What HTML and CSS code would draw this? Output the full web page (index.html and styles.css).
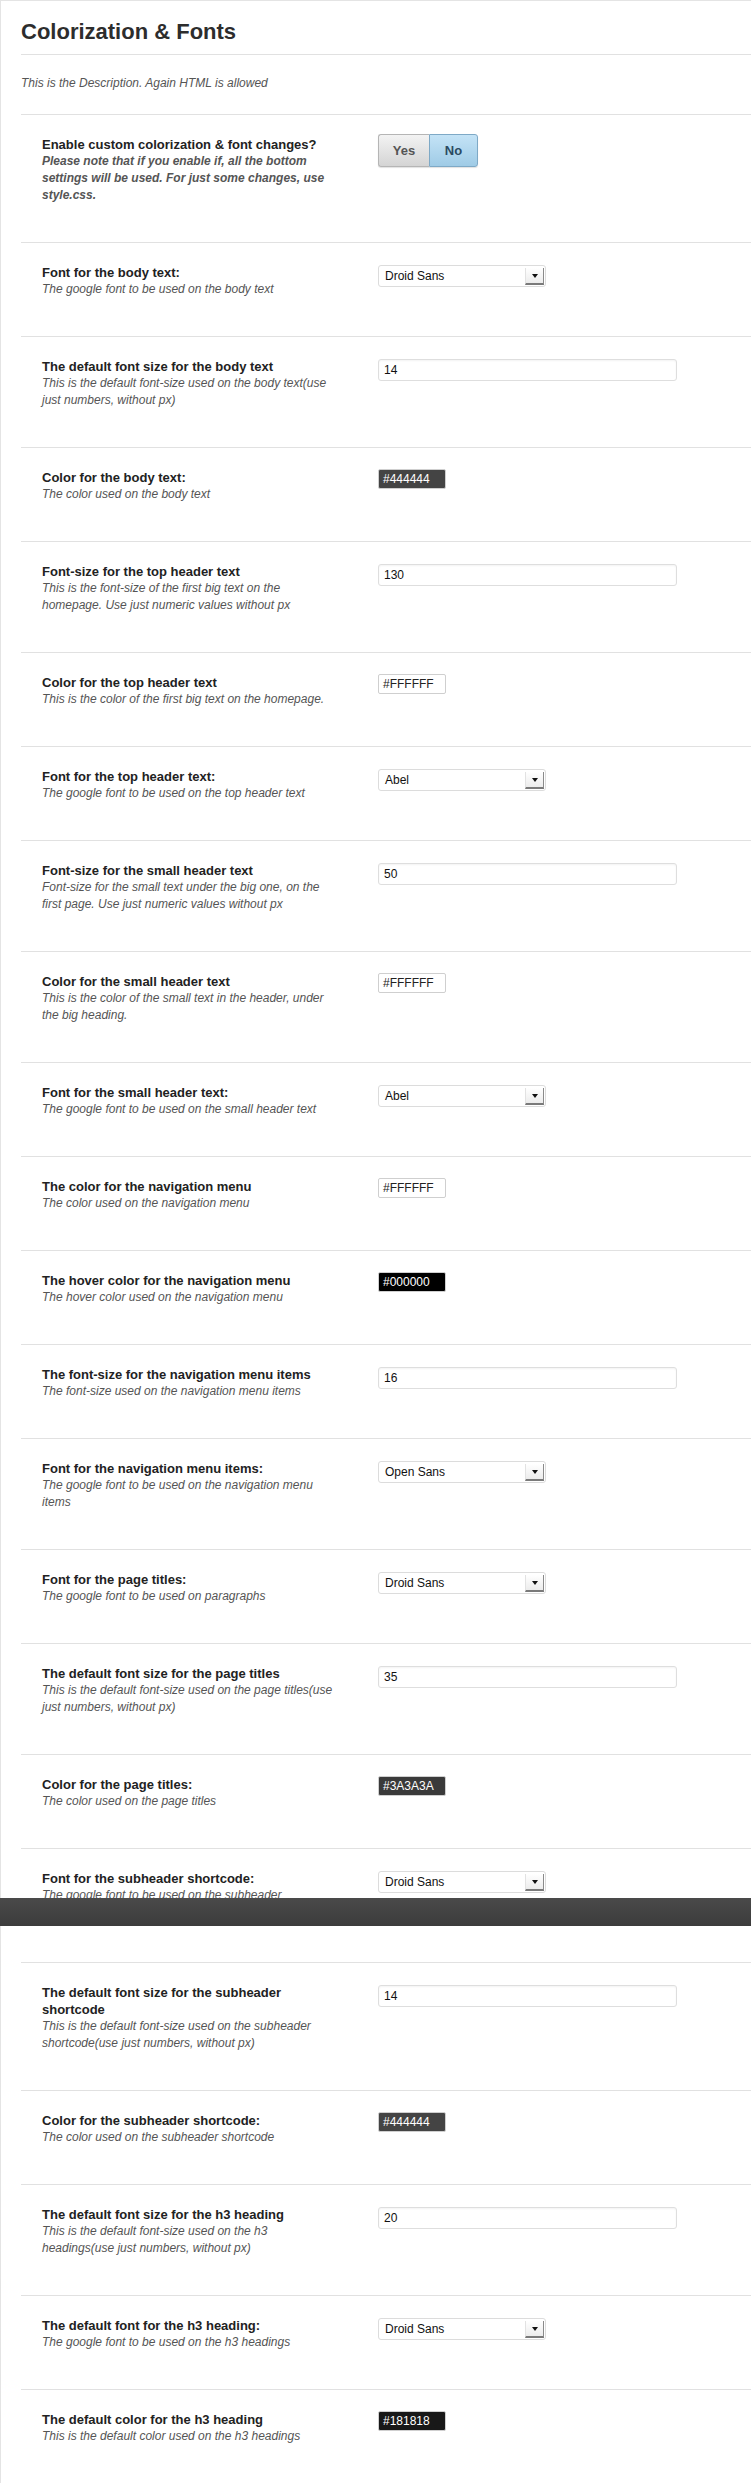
FILE: index.html
```html
<!DOCTYPE html>
<html>
<head>
<meta charset="utf-8">
<title>Colorization &amp; Fonts</title>
<link rel="stylesheet" href="styles.css">
</head>
<body>
<div class="wrap">
  <h2 class="title">Colorization &amp; Fonts</h2>
  <p class="intro">This is the Description. Again HTML is allowed</p>

  <div class="row">
    <div class="info"><div class="label">Enable custom colorization &amp; font changes?</div><div class="desc strong">Please note that if you enable if, all the bottom settings will be used. For just some changes, use style.css.</div></div>
    <div class="ctrl"><div class="toggle"><span class="opt yes">Yes</span><span class="opt no">No</span></div></div>
  </div>

  <div class="row">
    <div class="info"><div class="label">Font for the body text:</div><div class="desc">The google font to be used on the body text</div></div>
    <div class="ctrl"><div class="select"><span class="sel-text">Droid Sans</span><span class="arrow"></span></div></div>
  </div>

  <div class="row">
    <div class="info"><div class="label">The default font size for the body text</div><div class="desc">This is the default font-size used on the body text(use just numbers, without px)</div></div>
    <div class="ctrl"><div class="input">14</div></div>
  </div>

  <div class="row">
    <div class="info"><div class="label">Color for the body text:</div><div class="desc">The color used on the body text</div></div>
    <div class="ctrl"><div class="color dark c444">#444444</div></div>
  </div>

  <div class="row">
    <div class="info"><div class="label">Font-size for the top header text</div><div class="desc">This is the font-size of the first big text on the homepage. Use just numeric values without px</div></div>
    <div class="ctrl"><div class="input">130</div></div>
  </div>

  <div class="row">
    <div class="info"><div class="label">Color for the top header text</div><div class="desc">This is the color of the first big text on the homepage.</div></div>
    <div class="ctrl"><div class="color light">#FFFFFF</div></div>
  </div>

  <div class="row">
    <div class="info"><div class="label">Font for the top header text:</div><div class="desc">The google font to be used on the top header text</div></div>
    <div class="ctrl"><div class="select"><span class="sel-text">Abel</span><span class="arrow"></span></div></div>
  </div>

  <div class="row">
    <div class="info"><div class="label">Font-size for the small header text</div><div class="desc">Font-size for the small text under the big one, on the first page. Use just numeric values without px</div></div>
    <div class="ctrl"><div class="input">50</div></div>
  </div>

  <div class="row">
    <div class="info"><div class="label">Color for the small header text</div><div class="desc">This is the color of the small text in the header, under the big heading.</div></div>
    <div class="ctrl"><div class="color light">#FFFFFF</div></div>
  </div>

  <div class="row">
    <div class="info"><div class="label">Font for the small header text:</div><div class="desc">The google font to be used on the small header text</div></div>
    <div class="ctrl"><div class="select"><span class="sel-text">Abel</span><span class="arrow"></span></div></div>
  </div>

  <div class="row">
    <div class="info"><div class="label">The color for the navigation menu</div><div class="desc">The color used on the navigation menu</div></div>
    <div class="ctrl"><div class="color light">#FFFFFF</div></div>
  </div>

  <div class="row">
    <div class="info"><div class="label">The hover color for the navigation menu</div><div class="desc">The hover color used on the navigation menu</div></div>
    <div class="ctrl"><div class="color dark c000">#000000</div></div>
  </div>

  <div class="row">
    <div class="info"><div class="label">The font-size for the navigation menu items</div><div class="desc">The font-size used on the navigation menu items</div></div>
    <div class="ctrl"><div class="input">16</div></div>
  </div>

  <div class="row">
    <div class="info"><div class="label">Font for the navigation menu items:</div><div class="desc">The google font to be used on the navigation menu items</div></div>
    <div class="ctrl"><div class="select"><span class="sel-text">Open Sans</span><span class="arrow"></span></div></div>
  </div>

  <div class="row">
    <div class="info"><div class="label">Font for the page titles:</div><div class="desc">The google font to be used on paragraphs</div></div>
    <div class="ctrl"><div class="select"><span class="sel-text">Droid Sans</span><span class="arrow"></span></div></div>
  </div>

  <div class="row">
    <div class="info"><div class="label">The default font size for the page titles</div><div class="desc">This is the default font-size used on the page titles(use just numbers, without px)</div></div>
    <div class="ctrl"><div class="input">35</div></div>
  </div>

  <div class="row">
    <div class="info"><div class="label">Color for the page titles:</div><div class="desc">The color used on the page titles</div></div>
    <div class="ctrl"><div class="color dark c3a3a3a">#3A3A3A</div></div>
  </div>

  <div class="row row-under-bar">
    <div class="info"><div class="label">Font for the subheader shortcode:</div><div class="desc">The google font to be used on the subheader shortcode</div></div>
    <div class="ctrl"><div class="select"><span class="sel-text">Droid Sans</span><span class="arrow"></span></div></div>
  </div>

  <div class="row">
    <div class="info"><div class="label">The default font size for the subheader shortcode</div><div class="desc">This is the default font-size used on the subheader shortcode(use just numbers, without px)</div></div>
    <div class="ctrl"><div class="input">14</div></div>
  </div>

  <div class="row">
    <div class="info"><div class="label">Color for the subheader shortcode:</div><div class="desc">The color used on the subheader shortcode</div></div>
    <div class="ctrl"><div class="color dark c444">#444444</div></div>
  </div>

  <div class="row">
    <div class="info"><div class="label">The default font size for the h3 heading</div><div class="desc">This is the default font-size used on the h3 headings(use just numbers, without px)</div></div>
    <div class="ctrl"><div class="input">20</div></div>
  </div>

  <div class="row">
    <div class="info"><div class="label">The default font for the h3 heading:</div><div class="desc">The google font to be used on the h3 headings</div></div>
    <div class="ctrl"><div class="select"><span class="sel-text">Droid Sans</span><span class="arrow"></span></div></div>
  </div>

  <div class="row">
    <div class="info"><div class="label">The default color for the h3 heading</div><div class="desc">This is the default color used on the h3 headings</div></div>
    <div class="ctrl"><div class="color dark c181818">#181818</div></div>
  </div>
</div>
<div class="savebar"></div>
</body>
</html>
```

FILE: styles.css
```css
html, body {
  margin: 0;
  padding: 0;
  background: #ffffff;
}

body {
  font-family: "Liberation Sans", Arial, Helvetica, sans-serif;
  color: #333333;
  min-height: 2483px;
}

.wrap {
  border-top: 1px solid #e4e4e4;
  border-left: 1px solid #e4e4e4;
  padding-left: 20px;
}

.title {
  margin: 0;
  padding: 18px 0 9px 0;
  font-size: 22px;
  line-height: 26px;
  font-weight: bold;
  color: #2d2d2d;
  border-bottom: 1px solid #e1e1e1;
}

.intro {
  margin: 0;
  padding: 20px 0 22px 0;
  font-size: 12px;
  line-height: 17px;
  font-style: italic;
  color: #555555;
  border-bottom: 1px solid #e1e1e1;
}

.row {
  display: grid;
  grid-template-columns: 295px 1fr;
  column-gap: 41px;
  padding: 21px 0 38px 21px;
  border-bottom: 1px solid #e1e1e1;
}

.row-under-bar {
  padding-bottom: 41px;
}

.label {
  font-size: 13px;
  line-height: 17px;
  font-weight: bold;
  color: #222222;
}

.desc {
  font-size: 12px;
  line-height: 17px;
  font-style: italic;
  color: #555555;
}

.desc.strong {
  font-weight: bold;
  color: #555555;
}

.ctrl {
  display: flex;
  align-items: flex-start;
}

/* toggle */
.toggle {
  display: flex;
  margin-top: -2px;
  height: 33px;
  border-radius: 3px;
  box-shadow: 0 1px 1px rgba(0, 0, 0, 0.12);
}

.opt {
  display: flex;
  align-items: center;
  justify-content: center;
  font-size: 13px;
  font-weight: bold;
  box-sizing: border-box;
  height: 33px;
}

.opt.yes {
  width: 51px;
  color: #555555;
  background: linear-gradient(#f3f3f3, #d4d4d4);
  border: 1px solid #b5b5b5;
  border-right: none;
  border-radius: 3px 0 0 3px;
}

.opt.no {
  width: 49px;
  color: #2b4a62;
  background: linear-gradient(#c4e3f6, #9fcbe6);
  border: 1px solid #7ea9c6;
  border-radius: 0 3px 3px 0;
}

/* select */
.select {
  margin-top: 1px;
  box-sizing: border-box;
  width: 168px;
  height: 22px;
  border: 1px solid #dcdcdc;
  border-radius: 3px;
  background: #ffffff;
  display: flex;
  align-items: center;
  justify-content: space-between;
  padding: 0 1px 0 6px;
}

.sel-text {
  font-size: 12px;
  color: #111111;
}

.arrow {
  position: relative;
  box-sizing: border-box;
  width: 19px;
  height: 17px;
  background: linear-gradient(#ffffff, #ececec);
  border-left: 1px solid #e2e2e2;
  border-right: 1px solid #8a8a8a;
  border-bottom: 2px solid #7a7a7a;
}

.arrow::after {
  content: "";
  position: absolute;
  left: 6px;
  top: 6px;
  border-left: 3px solid transparent;
  border-right: 3px solid transparent;
  border-top: 4px solid #111111;
}

/* text input */
.input {
  margin-top: 1px;
  box-sizing: border-box;
  width: 299px;
  height: 22px;
  border: 1px solid #dedede;
  border-radius: 3px;
  background: #ffffff;
  box-shadow: inset 0 1px 2px rgba(0, 0, 0, 0.05);
  font-size: 12px;
  line-height: 20px;
  padding-left: 5px;
  color: #111111;
}

/* color field */
.color {
  box-sizing: border-box;
  width: 68px;
  height: 20px;
  border: 1px solid #cfcfcf;
  border-radius: 2px;
  font-size: 12px;
  line-height: 18px;
  padding-left: 4px;
}

.color.light {
  background: #ffffff;
  color: #222222;
}

.color.dark {
  color: #ffffff;
}

.c444 { background: #444444; }
.c000 { background: #000000; }
.c3a3a3a { background: #3a3a3a; }
.c181818 { background: #181818; }

/* sticky save bar captured over the content */
.savebar {
  position: absolute;
  top: 1898px;
  left: 0;
  width: 751px;
  height: 28px;
  background: linear-gradient(#4a4a4a, #3c3c3c);
}
```
